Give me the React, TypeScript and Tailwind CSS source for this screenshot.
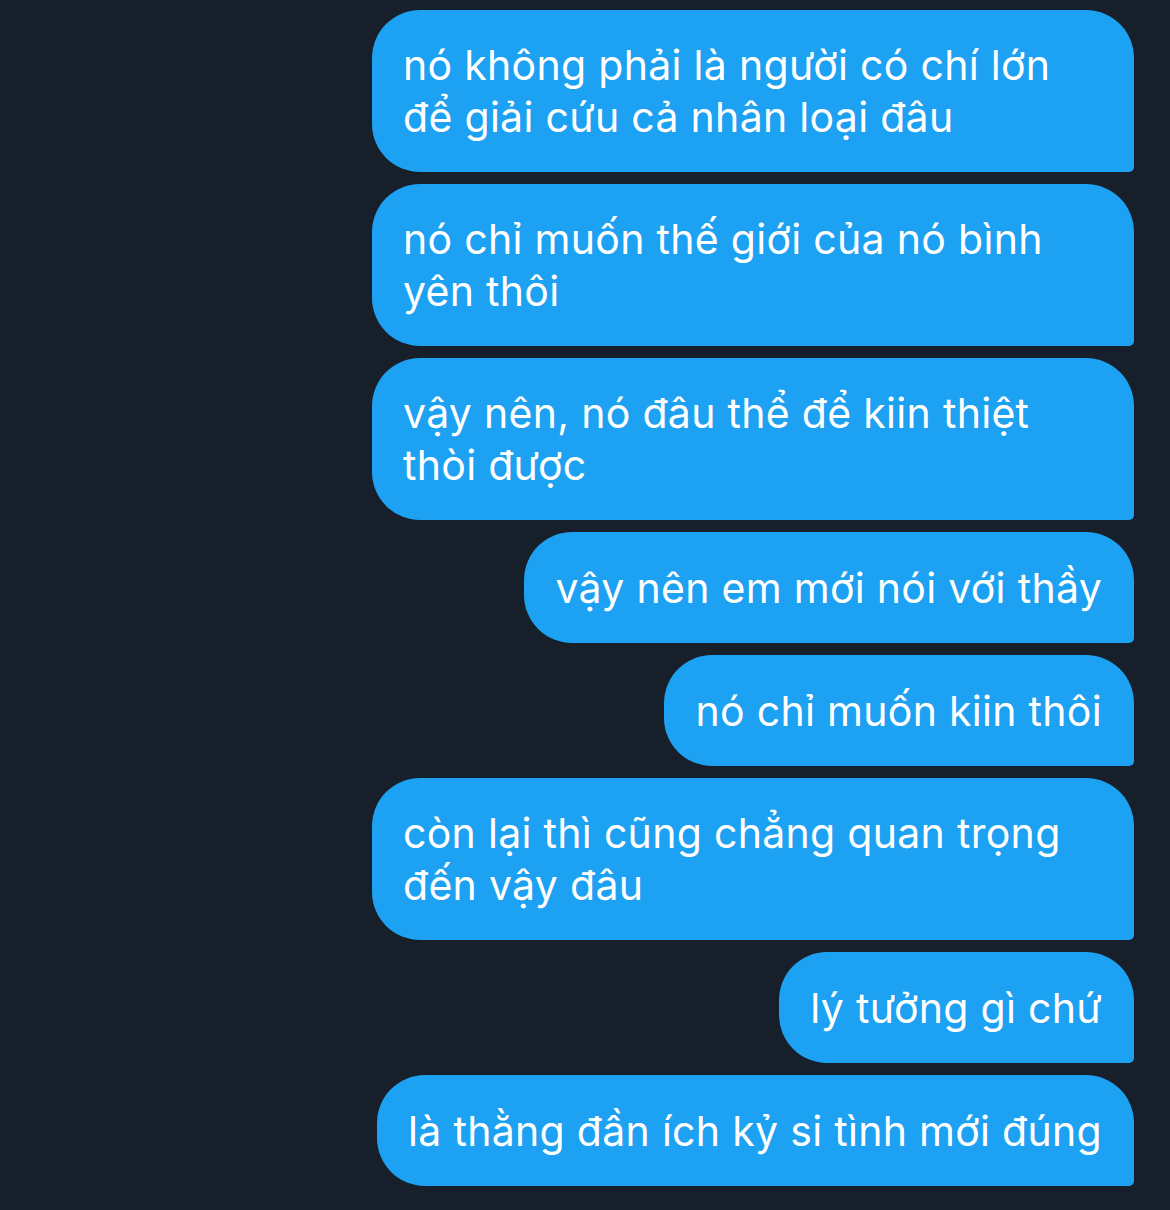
const messages: { lines: string[]; wide: boolean }[] = [
  { lines: ["nó không phải là người có chí lớn", "để giải cứu cả nhân loại đâu"], wide: true },
  { lines: ["nó chỉ muốn thế giới của nó bình", "yên thôi"], wide: true },
  { lines: ["vậy nên, nó đâu thể để kiin thiệt", "thòi được"], wide: true },
  { lines: ["vậy nên em mới nói với thầy"], wide: false },
  { lines: ["nó chỉ muốn kiin thôi"], wide: false },
  { lines: ["còn lại thì cũng chẳng quan trọng", "đến vậy đâu"], wide: true },
  { lines: ["lý tưởng gì chứ"], wide: false },
  { lines: ["là thằng đần ích kỷ si tình mới đúng"], wide: false },
];

function Bubble({ lines, wide }: { lines: string[]; wide: boolean }) {
  return (
    <div
      className={
        "bg-[#1da1f2] text-white rounded-[48px] rounded-br-[5px] pl-[31px] pr-[32px] text-[41px] tracking-[0.3px] leading-[52px] whitespace-nowrap " +
        (wide ? "w-[762px] py-[29px]" : "py-[29.5px]")
      }
    >
      {lines.map((l, i) => (
        <div key={i}>{l}</div>
      ))}
    </div>
  );
}

export default function App() {
  return (
    <div
      className="w-[1170px] h-[1210px] bg-[#17202a] overflow-hidden"
      style={{ fontFamily: "Inter, 'Noto Sans', sans-serif" }}
    >
      <div className="flex flex-col items-end gap-[12px] pt-[10px] pr-[36px]">
        {messages.map((m, i) => (
          <Bubble key={i} lines={m.lines} wide={m.wide} />
        ))}
      </div>
    </div>
  );
}
